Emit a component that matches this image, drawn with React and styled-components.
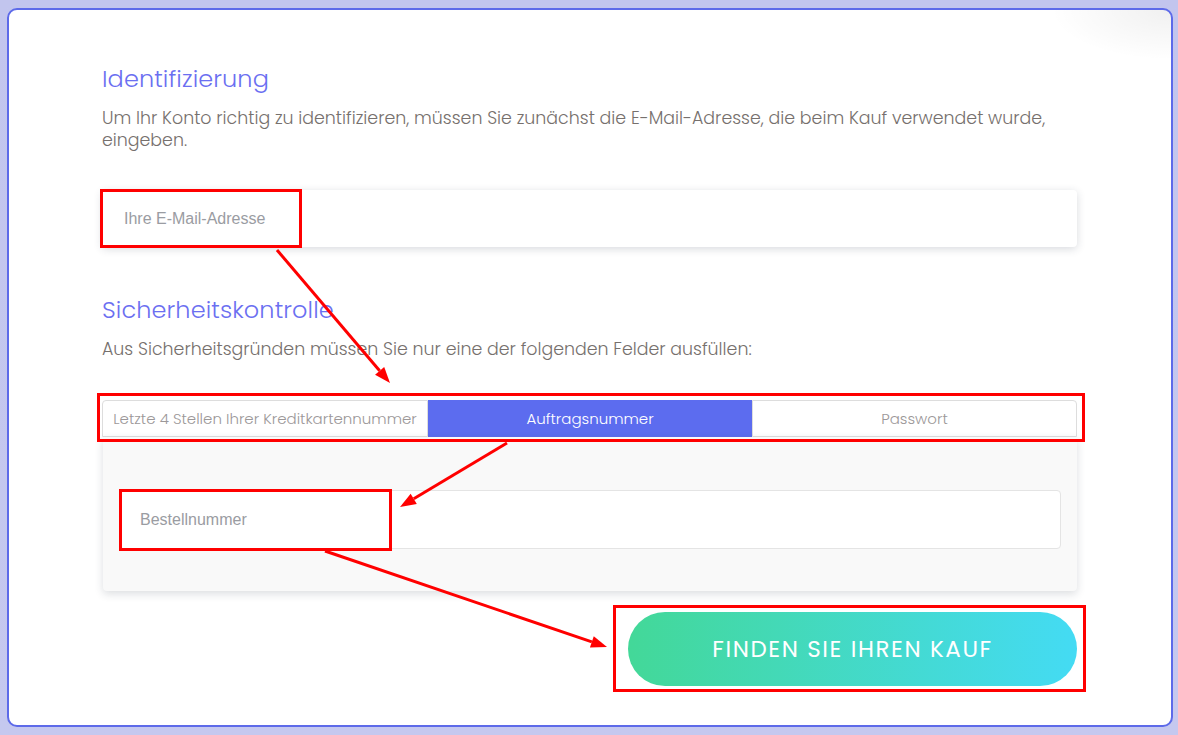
import React from 'react';
import styled, { createGlobalStyle } from 'styled-components';

const GlobalStyle = createGlobalStyle`
  html, body {
    margin: 0;
    padding: 0;
  }
  body {
    background: linear-gradient(180deg, #c2c5ee 0%, #c5c8ef 100%);
    font-family: 'Poppins', 'Open Sans', 'Liberation Sans', sans-serif;
  }
`;

const Page = styled.div`
  position: relative;
  width: 1178px;
  height: 735px;
  padding: 8px 5px 8px 7px;
  box-sizing: border-box;
`;

const Card = styled.div`
  height: 719px;
  box-sizing: border-box;
  border: 2px solid #5d6ae9;
  border-radius: 10px;
  background:
    radial-gradient(ellipse 120px 50px at 100% 0%, rgba(0, 0, 0, 0.06), rgba(0, 0, 0, 0) 100%),
    #ffffff;
  padding: 54px 94px 0 93px;
  display: flex;
  flex-direction: column;
`;

const Heading = styled.h2`
  margin: 0;
  font-size: 24px;
  line-height: 29px;
  font-weight: 300;
  color: #6b6ff1;
  letter-spacing: 0.1px;
`;

const Text = styled.p`
  margin: 14px 0 0;
  font-size: 17.4px;
  line-height: 22px;
  font-weight: 300;
  color: #76706d;
`;

const EmailField = styled.div`
  margin-top: 39px;
  height: 57px;
  background: #fff;
  border-radius: 4px;
  box-shadow: 0 2px 8px rgba(40, 50, 70, 0.18);
  display: flex;
  align-items: center;
  padding-left: 22px;
`;

const Placeholder = styled.span`
  font-family: 'Liberation Sans', Arial, sans-serif;
  font-size: 16px;
  color: #9a9ca2;
`;

const Section = styled.div`
  margin-top: 48px;
  display: flex;
  flex-direction: column;
`;

const Tabs = styled.div`
  margin-top: 40px;
  display: grid;
  grid-template-columns: 326px 324px 1fr;
  height: 37px;
`;

const Tab = styled.div`
  display: flex;
  align-items: center;
  justify-content: center;
  font-size: 15px;
  font-weight: 300;
  box-sizing: border-box;
  color: ${(p) => (p.$active ? '#ffffff' : '#9c9899')};
  background: ${(p) => (p.$active ? '#5c6cef' : '#ffffff')};
  border: 1px solid ${(p) => (p.$active ? '#5c6cef' : '#dddddd')};
  border-radius: ${(p) => p.$radius || '0'};
  white-space: nowrap;
  overflow: hidden;
`;

const Panel = styled.div`
  margin-left: 1px;
  background: #f9f9f9;
  padding: 53px 16px 42px;
  border-radius: 0 0 4px 4px;
  box-shadow: 0 3px 8px rgba(40, 50, 70, 0.16);
`;

const OrderField = styled.div`
  height: 59px;
  box-sizing: border-box;
  background: #fff;
  border: 1px solid #e4e4e4;
  border-radius: 4px;
  display: flex;
  align-items: center;
  padding-left: 20px;
`;

const Actions = styled.div`
  margin-top: 21px;
  display: flex;
  justify-content: flex-end;
`;

const SubmitButton = styled.button`
  width: 449px;
  height: 74px;
  border: none;
  border-radius: 37px;
  background: linear-gradient(90deg, #43d898 0%, #44dbf4 100%);
  color: #ffffff;
  font-family: 'Poppins', 'Open Sans', 'Liberation Sans', sans-serif;
  font-size: 23px;
  font-weight: 400;
  letter-spacing: 1.6px;
  cursor: pointer;
`;

const Annotations = styled.svg`
  position: absolute;
  left: 0;
  top: 0;
  pointer-events: none;
`;

function Arrow({ x1, y1, x2, y2 }) {
  const a = Math.atan2(y2 - y1, x2 - x1);
  const len = 16;
  const w = 6;
  const bx = x2 - len * Math.cos(a);
  const by = y2 - len * Math.sin(a);
  const px = -Math.sin(a) * w;
  const py = Math.cos(a) * w;
  return (
    <g>
      <line x1={x1} y1={y1} x2={bx} y2={by} stroke="#ff0000" strokeWidth="3" />
      <polygon
        points={`${x2},${y2} ${bx + px},${by + py} ${bx - px},${by - py}`}
        fill="#ff0000"
      />
    </g>
  );
}

export default function App() {
  return (
    <>
      <GlobalStyle />
      <Page>
        <Card>
          <Heading>Identifizierung</Heading>
          <Text>
            Um Ihr Konto richtig zu identifizieren, müssen Sie zunächst die E-Mail-Adresse, die beim Kauf verwendet wurde, eingeben.
          </Text>
          <EmailField>
            <Placeholder>Ihre E-Mail-Adresse</Placeholder>
          </EmailField>

          <Section>
            <Heading>Sicherheitskontrolle</Heading>
            <Text>Aus Sicherheitsgründen müssen Sie nur eine der folgenden Felder ausfüllen:</Text>
            <Tabs>
              <Tab $radius="4px 0 0 0">Letzte 4 Stellen Ihrer Kreditkartennummer</Tab>
              <Tab $active>Auftragsnummer</Tab>
              <Tab $radius="0 4px 0 0">Passwort</Tab>
            </Tabs>
            <Panel>
              <OrderField>
                <Placeholder>Bestellnummer</Placeholder>
              </OrderField>
            </Panel>
          </Section>

          <Actions>
            <SubmitButton>FINDEN SIE IHREN KAUF</SubmitButton>
          </Actions>
        </Card>

        <Annotations width="1178" height="735" viewBox="0 0 1178 735">
          <g fill="none" stroke="#ff0000" strokeWidth="3">
            <rect x="101.5" y="190.5" width="199" height="56" />
            <rect x="98.5" y="394.5" width="985" height="46" />
            <rect x="120.5" y="490.5" width="270" height="59" />
            <rect x="614.5" y="606.5" width="470" height="84" />
          </g>
          <Arrow x1={277} y1={250} x2={390} y2={383} />
          <Arrow x1={507} y1={443} x2={400} y2={507} />
          <Arrow x1={325} y1={551} x2={607} y2={647} />
        </Annotations>
      </Page>
    </>
  );
}
